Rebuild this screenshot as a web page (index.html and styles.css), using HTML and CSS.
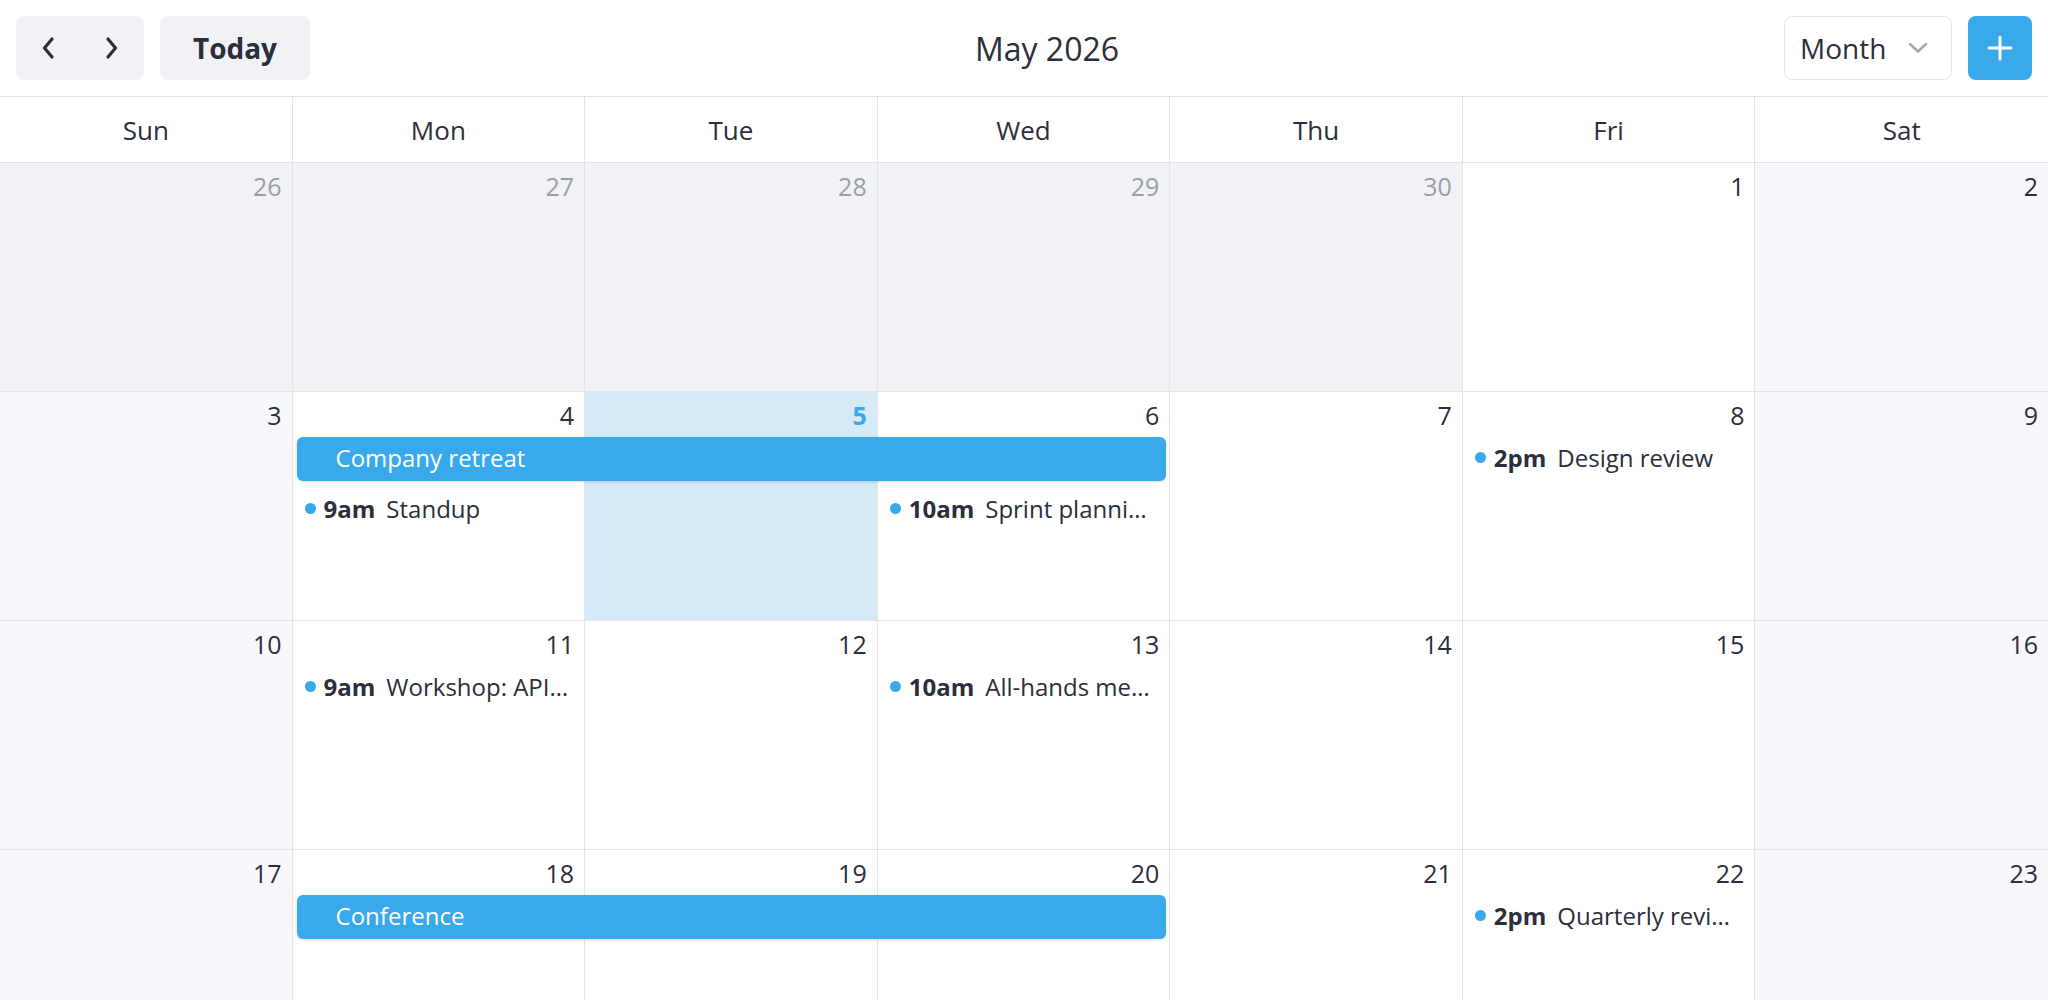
FILE: index.html
```html
<!DOCTYPE html>
<html lang="en">
<head>
<meta charset="utf-8">
<title>Calendar — May 2026</title>
<link rel="stylesheet" href="styles.css">
</head>
<body>
<div class="app">
  <header class="topbar">
    <div class="left-group">
      <div class="nav-group">
        <button class="nav-btn" aria-label="Previous month">
          <svg width="16" height="24" viewBox="0 0 16 24"><path d="M12 3 L4.5 12 L12 21" fill="none" stroke="#2b2e3b" stroke-width="3.2" stroke-linecap="round" stroke-linejoin="round"/></svg>
        </button>
        <button class="nav-btn" aria-label="Next month">
          <svg width="16" height="24" viewBox="0 0 16 24"><path d="M4 3 L11.5 12 L4 21" fill="none" stroke="#2b2e3b" stroke-width="3.2" stroke-linecap="round" stroke-linejoin="round"/></svg>
        </button>
      </div>
      <button class="today-btn">Today</button>
    </div>
    <h1 class="title">May 2026</h1>
    <div class="right-group">
      <div class="view-select">
        <span>Month</span>
        <svg width="20" height="12" viewBox="0 0 20 12"><path d="M2 2 L10 9.5 L18 2" fill="none" stroke="#a2a5ae" stroke-width="2.4" stroke-linecap="round" stroke-linejoin="round"/></svg>
      </div>
      <button class="add-btn" aria-label="Add event">
        <svg width="26" height="26" viewBox="0 0 26 26"><path d="M13 2 V24 M2 13 H24" fill="none" stroke="#ffffff" stroke-width="3" stroke-linecap="round"/></svg>
      </button>
    </div>
  </header>

  <div class="dow">
    <div class="dow-cell">Sun</div>
    <div class="dow-cell">Mon</div>
    <div class="dow-cell">Tue</div>
    <div class="dow-cell">Wed</div>
    <div class="dow-cell">Thu</div>
    <div class="dow-cell">Fri</div>
    <div class="dow-cell">Sat</div>
  </div>

  <div class="week">
    <div class="cell out"><span class="num">26</span></div>
    <div class="cell out"><span class="num">27</span></div>
    <div class="cell out"><span class="num">28</span></div>
    <div class="cell out"><span class="num">29</span></div>
    <div class="cell out"><span class="num">30</span></div>
    <div class="cell"><span class="num">1</span></div>
    <div class="cell weekend"><span class="num">2</span></div>
  </div>

  <div class="week">
    <div class="cell weekend"><span class="num">3</span></div>
    <div class="cell"><span class="num">4</span></div>
    <div class="cell today"><span class="num">5</span></div>
    <div class="cell"><span class="num">6</span></div>
    <div class="cell"><span class="num">7</span></div>
    <div class="cell"><span class="num">8</span></div>
    <div class="cell weekend"><span class="num">9</span></div>
    <div class="bar span-mon-wed slot1">Company retreat</div>
    <div class="ev col-mon slot2"><span class="dot"></span><span class="time">9am</span><span class="name">Standup</span></div>
    <div class="ev col-wed slot2"><span class="dot"></span><span class="time">10am</span><span class="name">Sprint planning meeting</span></div>
    <div class="ev col-fri slot1"><span class="dot"></span><span class="time">2pm</span><span class="name">Design review</span></div>
  </div>

  <div class="week">
    <div class="cell weekend"><span class="num">10</span></div>
    <div class="cell"><span class="num">11</span></div>
    <div class="cell"><span class="num">12</span></div>
    <div class="cell"><span class="num">13</span></div>
    <div class="cell"><span class="num">14</span></div>
    <div class="cell"><span class="num">15</span></div>
    <div class="cell weekend"><span class="num">16</span></div>
    <div class="ev col-mon slot1"><span class="dot"></span><span class="time">9am</span><span class="name">Workshop: API design</span></div>
    <div class="ev col-wed slot1"><span class="dot"></span><span class="time">10am</span><span class="name">All-hands meeting</span></div>
  </div>

  <div class="week">
    <div class="cell weekend"><span class="num">17</span></div>
    <div class="cell"><span class="num">18</span></div>
    <div class="cell"><span class="num">19</span></div>
    <div class="cell"><span class="num">20</span></div>
    <div class="cell"><span class="num">21</span></div>
    <div class="cell"><span class="num">22</span></div>
    <div class="cell weekend"><span class="num">23</span></div>
    <div class="bar span-mon-wed slot1">Conference</div>
    <div class="ev col-fri slot1"><span class="dot"></span><span class="time">2pm</span><span class="name">Quarterly review meeting</span></div>
  </div>

  <div class="week">
    <div class="cell weekend"><span class="num">24</span></div>
    <div class="cell"><span class="num">25</span></div>
    <div class="cell"><span class="num">26</span></div>
    <div class="cell"><span class="num">27</span></div>
    <div class="cell"><span class="num">28</span></div>
    <div class="cell"><span class="num">29</span></div>
    <div class="cell weekend"><span class="num">30</span></div>
  </div>

  <div class="week">
    <div class="cell weekend"><span class="num">31</span></div>
    <div class="cell out"><span class="num">1</span></div>
    <div class="cell out"><span class="num">2</span></div>
    <div class="cell out"><span class="num">3</span></div>
    <div class="cell out"><span class="num">4</span></div>
    <div class="cell out"><span class="num">5</span></div>
    <div class="cell out"><span class="num">6</span></div>
  </div>
</div>
</body>
</html>
```

FILE: styles.css
```css
* { box-sizing: border-box; }

html, body {
  margin: 0;
  padding: 0;
  height: 100%;
  overflow: hidden;
  background: #ffffff;
}

body {
  font-family: "Open Sans", "Noto Sans", sans-serif;
  color: #2b2e3b;
}

.app {
  height: 100vh;
  overflow: hidden;
}

/* ---------- top bar ---------- */
.topbar {
  height: 97px;
  border-bottom: 1px solid #e3e4e8;
  display: flex;
  align-items: center;
  justify-content: space-between;
  padding: 0 16px;
}

.left-group,
.right-group {
  display: flex;
  align-items: center;
  gap: 16px;
}

.nav-group {
  display: flex;
  background: #f1f2f6;
  border-radius: 8px;
  height: 64px;
}

.nav-btn {
  width: 64px;
  height: 64px;
  border: none;
  background: transparent;
  padding: 0;
  display: flex;
  align-items: center;
  justify-content: center;
}

.today-btn {
  width: 150px;
  height: 64px;
  border: none;
  border-radius: 8px;
  background: #f1f2f6;
  font-family: inherit;
  font-size: 28px;
  font-weight: 700;
  color: #2b2e3b;
  padding: 0;
}

.title {
  margin: 0;
  font-size: 32px;
  font-weight: 400;
  color: #2b2e3b;
}

.view-select {
  width: 168px;
  height: 64px;
  border: 1.5px solid #e3e4e8;
  border-radius: 8px;
  background: #ffffff;
  display: flex;
  align-items: center;
  justify-content: space-between;
  padding: 0 23px 0 15px;
  font-size: 28px;
  color: #2b2e3b;
}

.add-btn {
  width: 64px;
  height: 64px;
  border: none;
  border-radius: 8px;
  background: #3aa9eb;
  display: flex;
  align-items: center;
  justify-content: center;
  padding: 0;
}

/* ---------- day-of-week header ---------- */
.dow {
  display: grid;
  grid-template-columns: repeat(7, 1fr);
  height: 66px;
  border-bottom: 1px solid #e3e4e8;
}

.dow-cell {
  display: flex;
  align-items: center;
  justify-content: center;
  font-size: 26px;
  border-right: 1px solid #e3e4e8;
}

.dow-cell:last-child { border-right: none; }

/* ---------- weeks ---------- */
.week {
  display: grid;
  grid-template-columns: repeat(7, 1fr);
  grid-template-rows: 38px 44px 44px 1fr;
  row-gap: 7px;
  height: 229px;
  border-bottom: 1px solid #e3e4e8;
}

.cell {
  grid-row: 1 / -1;
  display: flex;
  justify-content: flex-end;
  align-items: flex-start;
  padding: 8px 10px 0;
  border-right: 1px solid #e3e4e8;
  background: #ffffff;
}

.cell:nth-child(1) { grid-column: 1; }
.cell:nth-child(2) { grid-column: 2; }
.cell:nth-child(3) { grid-column: 3; }
.cell:nth-child(4) { grid-column: 4; }
.cell:nth-child(5) { grid-column: 5; }
.cell:nth-child(6) { grid-column: 6; }
.cell:nth-child(7) { grid-column: 7; border-right: none; }

.num {
  font-size: 25px;
  line-height: 30px;
  color: #2b2e3b;
}

.cell.out { background: #f1f2f6; }
.cell.out .num { color: #9b9eaa; }
.cell.weekend { background: #f8f8fc; }
.cell.today { background: #d5e9f7; }
.cell.today .num { color: #3aa8ea; font-weight: 700; }

/* slots & columns */
.slot1 { grid-row: 2; }
.slot2 { grid-row: 3; }
.col-mon { grid-column: 2; }
.col-wed { grid-column: 4; }
.col-fri { grid-column: 6; }
.span-mon-wed { grid-column: 2 / span 3; }

.bar {
  margin: 0 4px;
  background: #3aa9eb;
  border-radius: 6px;
  box-shadow: 0 1px 3px rgba(30, 60, 90, 0.18);
  color: #ffffff;
  font-size: 24px;
  display: flex;
  align-items: center;
  padding: 0 0 4px 39px;
  white-space: nowrap;
  overflow: hidden;
}

.ev {
  display: flex;
  align-items: center;
  gap: 8px;
  padding: 0 12px 4px;
  font-size: 24px;
  white-space: nowrap;
  min-width: 0;
  overflow: hidden;
  color: #2b2e3b;
}

.dot {
  flex: none;
  width: 11px;
  height: 11px;
  border-radius: 50%;
  background: #3aa9eb;
}

.time {
  flex: none;
  font-weight: 700;
  margin-right: 3px;
}

.name {
  min-width: 0;
  overflow: hidden;
  text-overflow: ellipsis;
}
```
